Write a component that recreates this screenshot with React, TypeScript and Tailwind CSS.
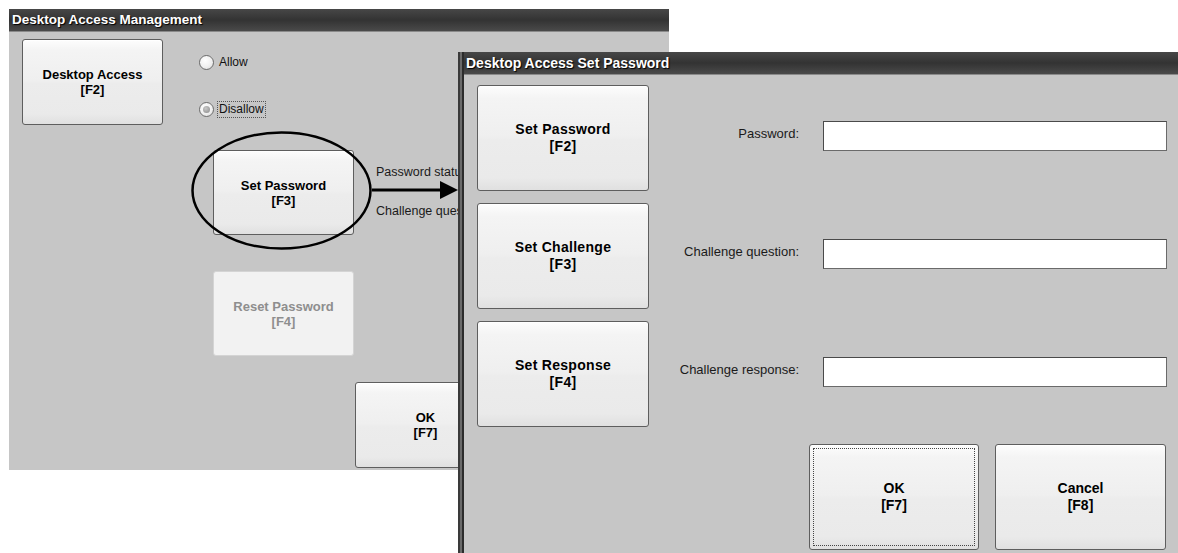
import React from 'react';

type KeyButtonProps = {
  label: string;
  fkey: string;
  className?: string;
  textClass?: string;
  disabled?: boolean;
  focused?: boolean;
};

// Touch-panel style soft key with a two-line caption
function KeyButton({ label, fkey, className = '', textClass = '', disabled, focused }: KeyButtonProps) {
  const frame = disabled
    ? 'border-[#d4d4d4] bg-[#f2f2f2] text-[#8e8e8e]'
    : 'border-[#5e5e5e] bg-[linear-gradient(to_bottom,#fdfdfd_0%,#f4f4f4_12%,#efefef_48%,#ececec_52%,#eaeaea_88%,#e0e0e0_100%)] text-black shadow-[inset_0_1px_0_#ffffff]';

  return (
    <div className={`relative flex shrink-0 flex-col items-center justify-center rounded-[3px] border ${frame} ${className}`}>
      {focused && <div className="absolute inset-[3px] border border-dotted border-[#444]" />}
      <span className={`text-center font-bold ${textClass}`}>{label}</span>
      <span className={`text-center font-bold ${textClass}`}>{fkey}</span>
    </div>
  );
}

function Radio({ label, checked, focused }: { label: string; checked?: boolean; focused?: boolean }) {
  return (
    <div className="flex h-[17px] items-center">
      <div className="flex h-[15px] w-[15px] items-center justify-center rounded-full border border-[#6c6c6c] bg-[radial-gradient(circle_at_40%_35%,#ffffff,#f0f0f0_55%,#d6d6d6)]">
        {checked && <div className="h-[7px] w-[7px] rounded-full bg-[radial-gradient(circle_at_40%_35%,#c8c8c8,#8a8a8a)]" />}
      </div>
      <span
        className={`ml-[3px] px-[1px] text-[12px] leading-[15px] text-[#111] ${
          focused ? 'border border-dotted border-[#555]' : 'border border-transparent'
        }`}
      >
        {label}
      </span>
    </div>
  );
}

function TitleBar({ title, className = '' }: { title: string; className?: string }) {
  return (
    <div
      className={`flex h-[23px] shrink-0 items-center border-b border-[#8a8a8a] bg-gradient-to-b from-[#474747] via-[#333333] to-[#4a4a4a] font-bold text-white [text-shadow:1px_1px_1px_#000] ${className}`}
    >
      {title}
    </div>
  );
}

function FieldRow({ button, fkey, label }: { button: string; fkey: string; label: string }) {
  return (
    <div className="flex items-center">
      <KeyButton label={button} fkey={fkey} className="h-[106px] w-[172px]" textClass="text-[14px] leading-[17px] tracking-[0.3px]" />
      <div className="mb-[8px] w-[150px] text-right text-[13px] text-[#1a1a1a]">{label}</div>
      <div className="mb-[4px] ml-[24px] h-[30px] w-[344px] border border-[#4a4a4a] border-b-[#6a6a6a] border-r-[#6a6a6a] bg-white" />
    </div>
  );
}

export default function App() {
  return (
    <div className="relative h-[553px] w-[1178px] overflow-hidden bg-white font-['Liberation_Sans',Arial,sans-serif]">
      {/* Desktop Access Management window */}
      <div className="absolute left-[9px] top-[9px] flex h-[461px] w-[660px] flex-col bg-[#c6c6c6]">
        <TitleBar title="Desktop Access Management" className="pl-[3px] text-[13.5px]" />
        <div className="flex flex-1 items-start pl-[13px] pt-[7px]">
          <KeyButton label="Desktop Access" fkey="[F2]" className="h-[86px] w-[141px]" textClass="text-[13px] leading-[15px]" />
          <div className="ml-[36px] flex flex-col">
            <div className="mt-[15px]">
              <Radio label="Allow" />
            </div>
            <div className="mt-[30px]">
              <Radio label="Disallow" checked focused />
            </div>
            <div className="ml-[14px] mt-[32px] flex items-start">
              <KeyButton label="Set Password" fkey="[F3]" className="h-[85px] w-[141px]" textClass="text-[13px] leading-[15px]" />
              <div className="ml-[22px] mt-[14px] flex flex-col whitespace-nowrap text-[12.5px] leading-[16px] text-[#1a1a1a]">
                <span>Password status:</span>
                <span className="mt-[23px]">Challenge question:</span>
              </div>
            </div>
            <KeyButton label="Reset Password" fkey="[F4]" disabled className="ml-[14px] mt-[36px] h-[85px] w-[141px]" textClass="text-[13px] leading-[15px]" />
            <KeyButton label="OK" fkey="[F7]" className="ml-[156px] mt-[26px] h-[86px] w-[141px]" textClass="text-[13px] leading-[15px]" />
          </div>
        </div>
      </div>

      {/* Callout: ellipse round Set Password and arrow to the next screen */}
      <svg className="pointer-events-none absolute left-0 top-0 z-20" width="1178" height="553" viewBox="0 0 1178 553">
        <ellipse cx="281.5" cy="190.5" rx="89" ry="58" fill="none" stroke="#000" strokeWidth="2.5" />
        <line x1="372" y1="190" x2="443" y2="190" stroke="#000" strokeWidth="3" />
        <polygon points="440,181 458,190 440,199" fill="#000" />
      </svg>

      {/* Desktop Access Set Password window */}
      <div className="absolute bottom-0 left-[458px] right-0 top-[52px] z-10 flex">
        <div className="w-[6px] shrink-0 bg-[linear-gradient(to_right,#3a3a3a_0%,#3a3a3a_33%,#6a6a6a_33%,#6a6a6a_60%,#2c2c2c_60%)]" />
        <div className="flex flex-1 flex-col">
          <TitleBar title="Desktop Access Set Password" className="pl-[2px] text-[14px]" />
          <div className="flex flex-1 flex-col bg-[#c6c6c6] pl-[13px] pt-[10px]">
            <div className="flex flex-col gap-[12px]">
              <FieldRow button="Set Password" fkey="[F2]" label="Password:" />
              <FieldRow button="Set Challenge" fkey="[F3]" label="Challenge question:" />
              <FieldRow button="Set Response" fkey="[F4]" label="Challenge response:" />
            </div>
            <div className="mt-[17px] flex justify-end gap-[16px] pr-[12px]">
              <KeyButton label="OK" fkey="[F7]" focused className="h-[106px] w-[170px]" textClass="text-[14px] leading-[17px]" />
              <KeyButton label="Cancel" fkey="[F8]" className="h-[106px] w-[171px]" textClass="text-[14px] leading-[17px]" />
            </div>
          </div>
        </div>
      </div>
    </div>
  );
}
